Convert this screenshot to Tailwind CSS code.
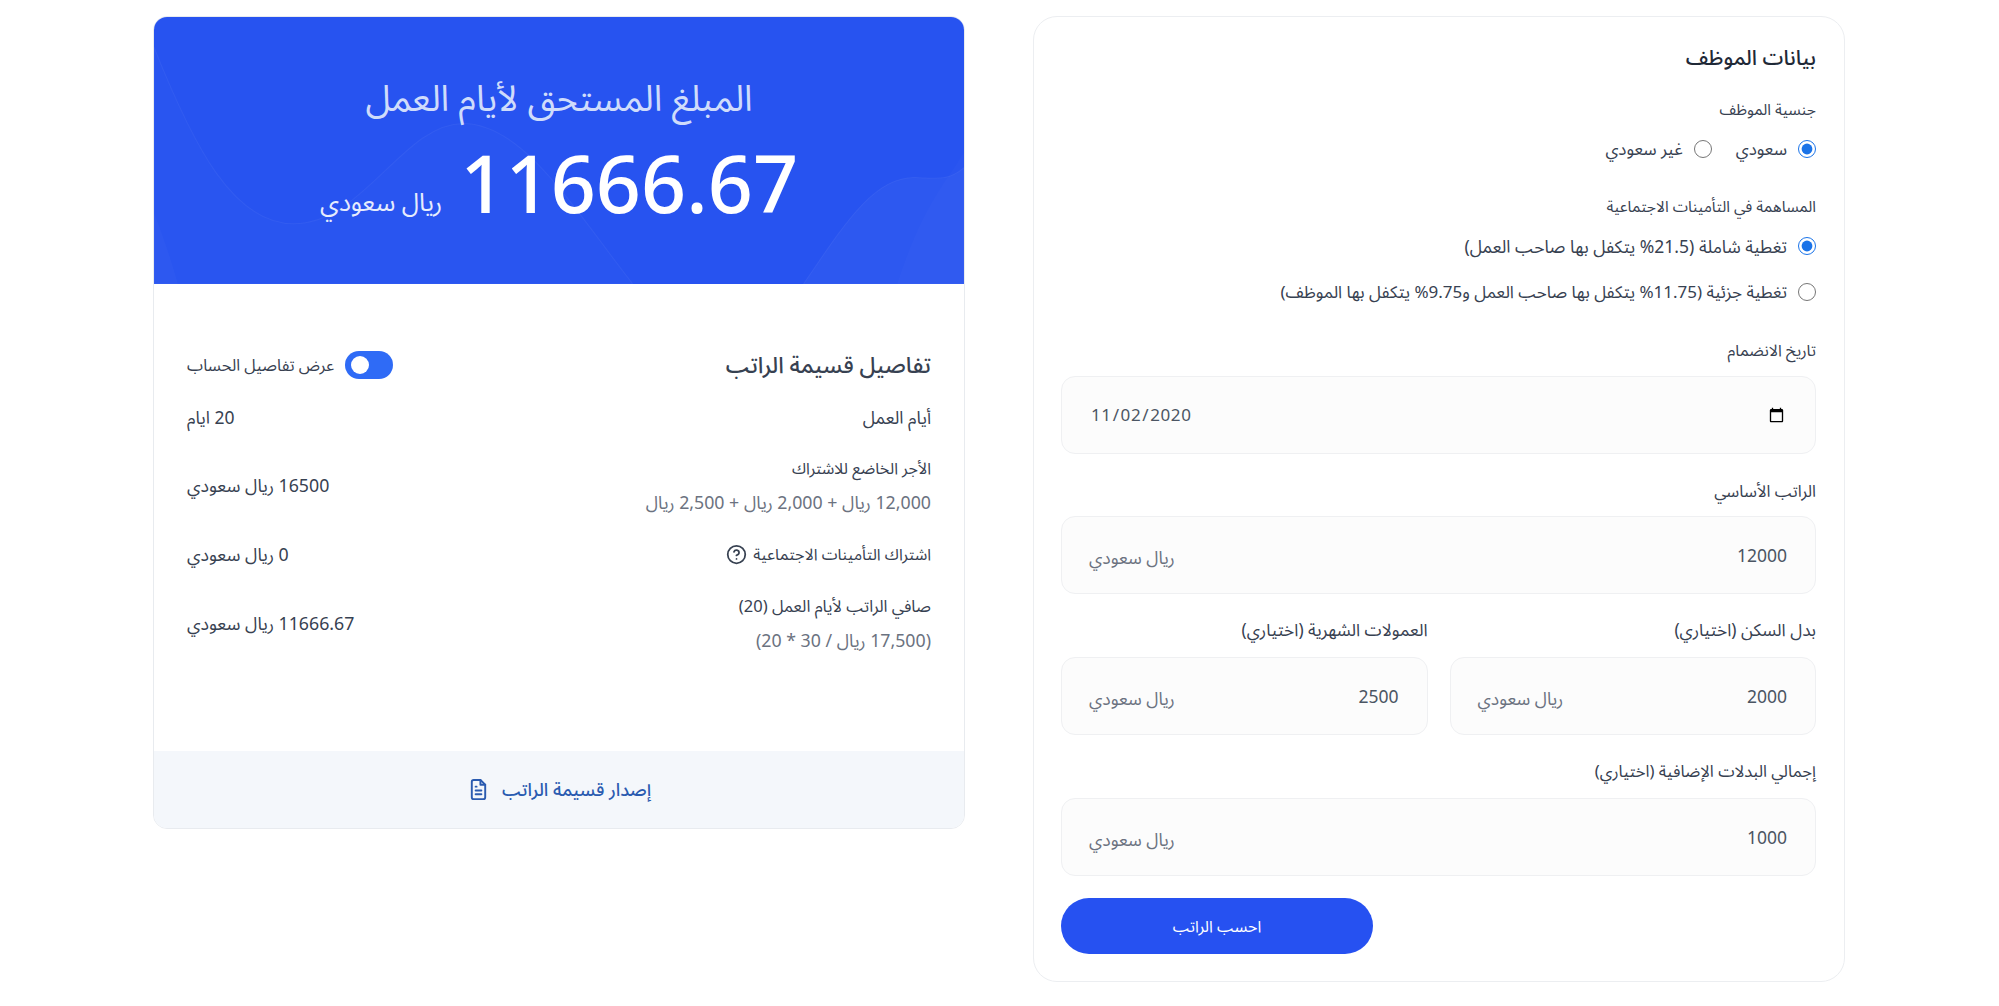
<!DOCTYPE html>
<html lang="ar" dir="rtl">
<head>
  <meta charset="UTF-8" />
  <meta name="viewport" content="width=device-width, initial-scale=1.0" />
  <title>حاسبة الراتب</title>
  <script src="https://cdn.jsdelivr.net/npm/@tailwindcss/browser@4"></script>
</head>
<body class="bg-white text-[#2b3544] font-['Noto_Sans','Noto_Sans_Arabic','DejaVu_Sans',sans-serif]">
  <main class="grid grid-cols-2 gap-[68px] pl-[153px] pr-[154px] pt-[16px] items-start">

    <!-- Employee form -->
    <section class="h-[966px] bg-white border border-[#eceef1] rounded-[24px] pr-[28px] pl-[27px] pt-[22px]">
      <h2 class="text-[21px] leading-[36px] font-medium text-[#1f2937]">بيانات الموظف</h2>

      <p class="mt-[22px] text-[15.5px] leading-[24px] text-[#374151]">جنسية الموظف</p>
      <div class="mt-[16px] flex items-center gap-[24px] text-[17px] leading-[24px] text-[#374151]">
        <label class="flex items-center gap-[11px]"><input type="radio" name="nat" checked class="size-[18px] accent-[#1a73e8]" />سعودي</label>
        <label class="flex items-center gap-[11px]"><input type="radio" name="nat" class="size-[18px]" />غير سعودي</label>
      </div>

      <p class="mt-[33px] text-[15.5px] leading-[24px] text-[#374151]">المساهمة في التأمينات الاجتماعية</p>
      <div class="mt-[16px] flex flex-col gap-[22px] text-[17px] leading-[24px] text-[#374151]">
        <label class="flex items-center gap-[11px] text-[17.5px]"><input type="radio" name="cov" checked class="size-[18px] accent-[#1a73e8]" />تغطية شاملة (21.5% يتكفل بها صاحب العمل)</label>
        <label class="flex items-center gap-[11px]"><input type="radio" name="cov" class="size-[18px]" />تغطية جزئية (11.75% يتكفل بها صاحب العمل و9.75% يتكفل بها الموظف)</label>
      </div>

      <label class="block mt-[34px] text-[16px] leading-[24px] text-[#374151]">تاريخ الانضمام</label>
      <input type="date" value="2020-11-02" dir="ltr" class="mt-[14px] block w-full h-[78px] px-[28px] bg-[#fcfcfc] border border-[#eff0f2] rounded-[14px] text-[17px] tracking-[0.6px] text-[#4b5563] font-['Noto_Sans',sans-serif]" />

      <label class="block mt-[25px] text-[16.5px] leading-[24px] text-[#374151]">الراتب الأساسي</label>
      <div class="relative mt-[13px]">
        <input type="text" value="12000" class="block w-full h-[78px] px-[28px] bg-[#fcfcfc] border border-[#eff0f2] rounded-[14px] text-[17.5px] text-[#4b5563]" />
        <span class="absolute left-[28px] top-[29px] text-[17.5px] leading-[24px] text-[#6b7280]">ريال سعودي</span>
      </div>

      <div class="mt-[24px] grid grid-cols-2 gap-[22px]">
        <div>
          <label class="block text-[17.3px] leading-[24px] text-[#374151]">بدل السكن (اختياري)</label>
          <div class="relative mt-[15px]">
            <input type="text" value="2000" class="block w-full h-[78px] px-[28px] bg-[#fcfcfc] border border-[#eff0f2] rounded-[14px] text-[17.5px] text-[#4b5563]" />
            <span class="absolute left-[28px] top-[29px] text-[17.5px] leading-[24px] text-[#6b7280]">ريال سعودي</span>
          </div>
        </div>
        <div>
          <label class="block text-[17.3px] leading-[24px] text-[#374151]">العمولات الشهرية (اختياري)</label>
          <div class="relative mt-[15px]">
            <input type="text" value="2500" class="block w-full h-[78px] px-[28px] bg-[#fcfcfc] border border-[#eff0f2] rounded-[14px] text-[17.5px] text-[#4b5563]" />
            <span class="absolute left-[28px] top-[29px] text-[17.5px] leading-[24px] text-[#6b7280]">ريال سعودي</span>
          </div>
        </div>
      </div>

      <label class="block mt-[24px] text-[16.6px] leading-[24px] text-[#374151]">إجمالي البدلات الإضافية (اختياري)</label>
      <div class="relative mt-[15px]">
        <input type="text" value="1000" class="block w-full h-[78px] px-[28px] bg-[#fcfcfc] border border-[#eff0f2] rounded-[14px] text-[17.5px] text-[#4b5563]" />
        <span class="absolute left-[28px] top-[29px] text-[17.5px] leading-[24px] text-[#6b7280]">ريال سعودي</span>
      </div>

      <div class="mt-[22px] flex justify-end">
        <button class="w-[312px] h-[56px] rounded-full bg-[#2651f1] text-white text-[16px]">احسب الراتب</button>
      </div>
    </section>

    <!-- Result card -->
    <section class="h-[813px] flex flex-col bg-white border border-[#e8ebef] rounded-[14px] overflow-hidden">
      <div class="relative h-[267px] shrink-0 bg-[#2753f0] overflow-hidden">
        <svg class="absolute inset-0 w-full h-full" viewBox="0 0 812 266" preserveAspectRatio="none" fill="none">
          <path d="M0 30C40 130 80 206 140 206C210 206 250 106 310 106C370 106 420 190 480 266H0Z" fill="#ffffff" fill-opacity="0.012" stroke="#ffffff" stroke-opacity="0.05"/>
          <path d="M0 195C10 220 18 245 24 266H0Z" fill="#ffffff" fill-opacity="0.02"/>
          <path d="M651 266C690 210 720 160 762 160C780 160 795 165 812 150V266Z" fill="#ffffff" fill-opacity="0.03" stroke="#ffffff" stroke-opacity="0.05"/>
          <path d="M812 135C790 170 770 190 745 266H812Z" fill="#ffffff" fill-opacity="0.015"/>
        </svg>
        <div class="relative flex flex-col items-center">
          <h2 class="mt-[56px] text-[36px] leading-[50px] text-[#cfdcfb]">المبلغ المستحق لأيام العمل</h2>
          <div class="mt-[17px] flex items-end gap-[18px]" dir="ltr">
            <span class="text-[25px] leading-[34px] text-[#e6ecfd] mb-[8px]" dir="rtl">ريال سعودي</span>
            <span class="text-[79px] leading-[86px] font-medium text-white font-['Noto_Sans',sans-serif]">11666.67</span>
          </div>
        </div>
      </div>

      <div class="flex-1 px-[33px]">
        <div class="mt-[63px] h-[36px] flex items-center justify-between">
          <h3 class="text-[22.5px] font-medium text-[#374151]">تفاصيل قسيمة الراتب</h3>
          <div class="flex items-center gap-[11px]">
            <span class="w-[48px] h-[28px] rounded-full bg-[#2f6bf6] flex items-center justify-end pl-[6px] pr-[6px]"><span class="block size-[18px] rounded-full bg-white"></span></span>
            <span class="text-[16.25px] text-[#374151]">عرض تفاصيل الحساب</span>
          </div>
        </div>
        <div class="mt-[22px] flex items-center justify-between h-[24px] text-[17.5px] text-[#374151]">
          <span>أيام العمل</span><span>20 ايام</span>
        </div>
        <div class="mt-[22px] flex items-center justify-between text-[16px] text-[#374151]">
          <div>
            <div class="leading-[34px]">الأجر الخاضع للاشتراك</div>
            <div class="leading-[34px] text-[17.75px] text-[#6b7280]">12,000 ريال + 2,000 ريال + 2,500 ريال</div>
          </div>
          <span class="text-[17.75px]">16500 ريال سعودي</span>
        </div>
        <div class="mt-[23px] flex items-center justify-between h-[24px] text-[16px] text-[#374151]">
          <span class="flex items-center gap-[6px]">اشتراك التأمينات الاجتماعية
            <svg class="size-[21px]" viewBox="0 0 24 24" fill="none" stroke="#374151" stroke-width="2" stroke-linecap="round" stroke-linejoin="round"><circle cx="12" cy="12" r="10"/><path d="M9.1 9a3 3 0 0 1 5.8 1c0 2-3 3-3 3"/><path d="M12 17h.01"/></svg>
          </span>
          <span class="text-[17.75px]">0 ريال سعودي</span>
        </div>
        <div class="mt-[23px] flex items-center justify-between text-[16.5px] text-[#374151]">
          <div>
            <div class="leading-[34px]">صافي الراتب لأيام العمل (20)</div>
            <div class="leading-[34px] text-[17.75px] text-[#6b7280]">(17,500 ريال / 30 * 20)</div>
          </div>
          <span class="text-[17.75px]">11666.67 ريال سعودي</span>
        </div>
      </div>

      <button class="h-[77px] shrink-0 bg-[#f4f7fb] flex items-center justify-center gap-[12px] text-[18px] font-medium text-[#2a5bb0]">
        إصدار قسيمة الراتب
        <svg class="size-[23px]" viewBox="0 0 24 24" fill="none" stroke="#2a5bb0" stroke-width="2" stroke-linecap="round" stroke-linejoin="round"><path d="M14 2H7a2 2 0 0 0-2 2v16a2 2 0 0 0 2 2h10a2 2 0 0 0 2-2V7z"/><path d="M14 2v5h5"/><path d="M9 13h6M9 17h6M9 9h1"/></svg>
      </button>
    </section>
  </main>
</body>
</html>
